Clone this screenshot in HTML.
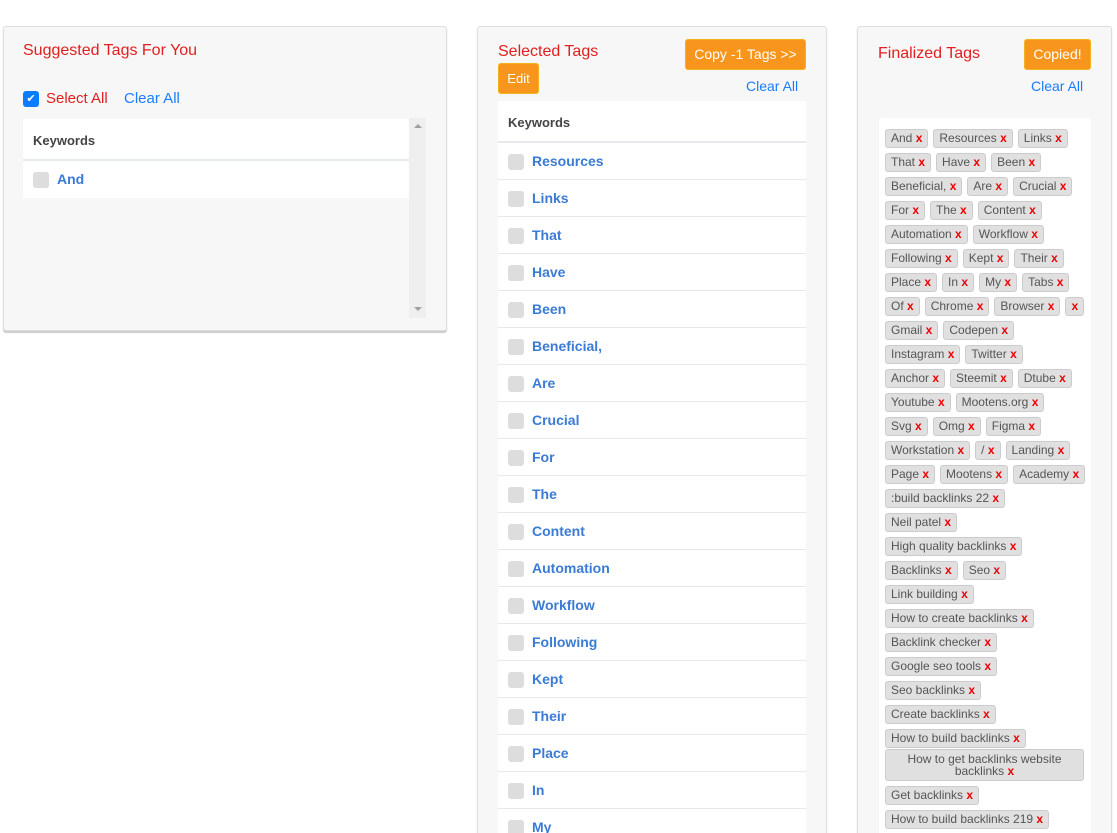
<!DOCTYPE html>
<html><head><meta charset="utf-8"><style>
*{box-sizing:border-box;margin:0;padding:0}
html,body{width:1117px;height:833px;overflow:hidden;background:#fff}
body{font-family:"Liberation Sans",sans-serif;position:relative}
#w{position:absolute;left:0;top:0;width:1117px;height:833px;overflow:hidden}
.panel{position:absolute;background:#f7f7f7;border:1px solid #ddd;border-radius:3px;box-shadow:0 2px 1px #ccc}
.t{position:absolute;color:#e0201e;font-size:16px;white-space:nowrap}
.lnk{position:absolute;color:#1a7dff;font-size:14px;white-space:nowrap}
.btn{position:absolute;background:#f7951d;border:1px solid #f5b31b;border-radius:3px;color:#fff;font-size:14px;text-align:center;white-space:nowrap}
.tbl{position:absolute;background:#fff}
.hd{height:42px;border-bottom:2px solid #e6e9ed;font-weight:bold;font-size:13px;color:#444;padding:14px 10px}
.row{height:37px;border-bottom:1px solid #e8e8e8;position:relative}
.cb{position:absolute;left:10px;top:11px;width:16px;height:16px;background:#ddd;border-radius:3px}
.kw{position:absolute;left:34px;top:10px;font-size:14px;font-weight:bold;color:#3a7bd5}
.tags{position:absolute;left:879px;top:118px;width:212px;height:740px;background:#fff;border-radius:3px}
.r{position:absolute;left:6px;display:flex;gap:5px;white-space:nowrap}
.g{display:inline-block;height:19px;line-height:17px;padding:0 5px;background:#e0e0e0;border:1px solid #ccc;border-radius:3px;font-size:12px;color:#555}
.g b{color:#e00;font-weight:bold}
</style></head><body><div id="w">

<div class="panel" style="left:3px;top:26px;width:444px;height:305px"></div>
<div class="t" style="left:23px;top:42px">Suggested Tags For You</div>
<div style="position:absolute;left:23px;top:91px;width:16px;height:16px;background:#0a7cff;border-radius:3px;color:#fff;font-size:11px;text-align:center;line-height:16px">✔</div>
<div class="t" style="left:46px;top:90px;font-size:15px">Select All</div>
<div class="lnk" style="left:124px;top:90px;font-size:15px">Clear All</div>
<div class="tbl" style="left:23px;top:119px;width:386px">
<div class="hd" style="height:42px">Keywords</div>
<div class="row" style="border:none"><div class="cb"></div><div class="kw">And</div></div>
</div>
<div style="position:absolute;left:409px;top:118px;width:17px;height:200px;background:#efefef"></div>
<div style="position:absolute;left:414px;top:124px;border:4px solid transparent;border-bottom:4px solid #a0a0a0;border-top:0"></div>
<div style="position:absolute;left:414px;top:307px;border:4px solid transparent;border-top:4px solid #a0a0a0;border-bottom:0"></div>

<div class="panel" style="left:477px;top:26px;width:350px;height:850px"></div>
<div class="t" style="left:498px;top:43px">Selected Tags</div>
<div class="btn" style="left:685px;top:39px;width:121px;height:31px;line-height:29px">Copy -1 Tags &gt;&gt;</div>
<div class="btn" style="left:498px;top:63px;width:41px;height:31px;line-height:29px;font-size:13px">Edit</div>
<div class="lnk" style="left:746px;top:78px">Clear All</div>
<div class="tbl" style="left:498px;top:101px;width:308px;height:760px">
<div class="hd">Keywords</div>
<div class="row"><div class="cb"></div><div class="kw">Resources</div></div>
<div class="row"><div class="cb"></div><div class="kw">Links</div></div>
<div class="row"><div class="cb"></div><div class="kw">That</div></div>
<div class="row"><div class="cb"></div><div class="kw">Have</div></div>
<div class="row"><div class="cb"></div><div class="kw">Been</div></div>
<div class="row"><div class="cb"></div><div class="kw">Beneficial,</div></div>
<div class="row"><div class="cb"></div><div class="kw">Are</div></div>
<div class="row"><div class="cb"></div><div class="kw">Crucial</div></div>
<div class="row"><div class="cb"></div><div class="kw">For</div></div>
<div class="row"><div class="cb"></div><div class="kw">The</div></div>
<div class="row"><div class="cb"></div><div class="kw">Content</div></div>
<div class="row"><div class="cb"></div><div class="kw">Automation</div></div>
<div class="row"><div class="cb"></div><div class="kw">Workflow</div></div>
<div class="row"><div class="cb"></div><div class="kw">Following</div></div>
<div class="row"><div class="cb"></div><div class="kw">Kept</div></div>
<div class="row"><div class="cb"></div><div class="kw">Their</div></div>
<div class="row"><div class="cb"></div><div class="kw">Place</div></div>
<div class="row"><div class="cb"></div><div class="kw">In</div></div>
<div class="row"><div class="cb"></div><div class="kw">My</div></div>
</div>

<div class="panel" style="left:857px;top:26px;width:255px;height:850px"></div>
<div class="t" style="left:878px;top:45px">Finalized Tags</div>
<div class="btn" style="left:1024px;top:39px;width:67px;height:31px;line-height:29px">Copied!</div>
<div class="lnk" style="left:1031px;top:78px">Clear All</div>
<div class="tags">
<div class="r" style="top:11px"><span class="g">And <b>x</b></span><span class="g">Resources <b>x</b></span><span class="g">Links <b>x</b></span></div>
<div class="r" style="top:35px"><span class="g">That <b>x</b></span><span class="g">Have <b>x</b></span><span class="g">Been <b>x</b></span></div>
<div class="r" style="top:59px"><span class="g">Beneficial, <b>x</b></span><span class="g">Are <b>x</b></span><span class="g">Crucial <b>x</b></span></div>
<div class="r" style="top:83px"><span class="g">For <b>x</b></span><span class="g">The <b>x</b></span><span class="g">Content <b>x</b></span></div>
<div class="r" style="top:107px"><span class="g">Automation <b>x</b></span><span class="g">Workflow <b>x</b></span></div>
<div class="r" style="top:131px"><span class="g">Following <b>x</b></span><span class="g">Kept <b>x</b></span><span class="g">Their <b>x</b></span></div>
<div class="r" style="top:155px"><span class="g">Place <b>x</b></span><span class="g">In <b>x</b></span><span class="g">My <b>x</b></span><span class="g">Tabs <b>x</b></span></div>
<div class="r" style="top:179px"><span class="g">Of <b>x</b></span><span class="g">Chrome <b>x</b></span><span class="g">Browser <b>x</b></span><span class="g"> <b>x</b></span></div>
<div class="r" style="top:203px"><span class="g">Gmail <b>x</b></span><span class="g">Codepen <b>x</b></span></div>
<div class="r" style="top:227px"><span class="g">Instagram <b>x</b></span><span class="g">Twitter <b>x</b></span></div>
<div class="r" style="top:251px"><span class="g">Anchor <b>x</b></span><span class="g">Steemit <b>x</b></span><span class="g">Dtube <b>x</b></span></div>
<div class="r" style="top:275px"><span class="g">Youtube <b>x</b></span><span class="g">Mootens.org <b>x</b></span></div>
<div class="r" style="top:299px"><span class="g">Svg <b>x</b></span><span class="g">Omg <b>x</b></span><span class="g">Figma <b>x</b></span></div>
<div class="r" style="top:323px"><span class="g">Workstation <b>x</b></span><span class="g">/ <b>x</b></span><span class="g">Landing <b>x</b></span></div>
<div class="r" style="top:347px"><span class="g">Page <b>x</b></span><span class="g">Mootens <b>x</b></span><span class="g">Academy <b>x</b></span></div>
<div class="r" style="top:371px"><span class="g">:build backlinks 22 <b>x</b></span></div>
<div class="r" style="top:395px"><span class="g">Neil patel <b>x</b></span></div>
<div class="r" style="top:419px"><span class="g">High quality backlinks <b>x</b></span></div>
<div class="r" style="top:443px"><span class="g">Backlinks <b>x</b></span><span class="g">Seo <b>x</b></span></div>
<div class="r" style="top:467px"><span class="g">Link building <b>x</b></span></div>
<div class="r" style="top:491px"><span class="g">How to create backlinks <b>x</b></span></div>
<div class="r" style="top:515px"><span class="g">Backlink checker <b>x</b></span></div>
<div class="r" style="top:539px"><span class="g">Google seo tools <b>x</b></span></div>
<div class="r" style="top:563px"><span class="g">Seo backlinks <b>x</b></span></div>
<div class="r" style="top:587px"><span class="g">Create backlinks <b>x</b></span></div>
<div class="r" style="top:611px"><span class="g">How to build backlinks <b>x</b></span></div>
<div class="r" style="top:631px"><span class="g" style="width:199px;height:32px;line-height:12px;padding-top:3px;text-align:center;white-space:normal">How to get backlinks website backlinks <b>x</b></span></div>
<div class="r" style="top:668px"><span class="g">Get backlinks <b>x</b></span></div>
<div class="r" style="top:692px"><span class="g">How to build backlinks 219 <b>x</b></span></div>
</div>
</div></body></html>
